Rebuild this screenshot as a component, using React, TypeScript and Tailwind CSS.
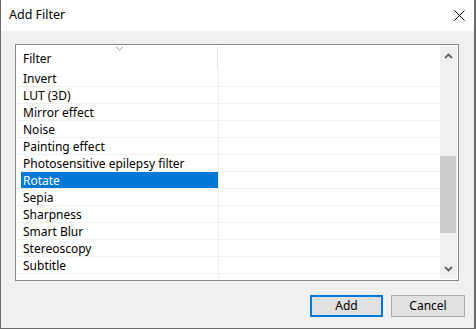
const filters = [
  'Invert',
  'LUT (3D)',
  'Mirror effect',
  'Noise',
  'Painting effect',
  'Photosensitive epilepsy filter',
  'Rotate',
  'Sepia',
  'Sharpness',
  'Smart Blur',
  'Stereoscopy',
  'Subtitle',
  '',
];

const selected = 'Rotate';

function Chevron({ up }: { up?: boolean }) {
  return (
    <svg width="9" height="6" viewBox="0 0 9 6" className="block">
      <path
        d={up ? 'M1 5 L4.5 1.5 L8 5' : 'M1 1 L4.5 4.5 L8 1'}
        fill="none"
        stroke="#606060"
        strokeWidth="1.8"
      />
    </svg>
  );
}

export default function App() {
  return (
    <div className="w-[476px] h-[329px] flex flex-col bg-[#f0f0f0] border-l border-r-2 border-b border-[#6b6b6b] font-['Noto_Sans',sans-serif] text-black overflow-hidden">
      {/* Title bar */}
      <div className="h-[31px] bg-white flex items-center justify-between pl-[8px] pr-[9px] shrink-0">
        <span className="text-[12.5px] leading-none">Add Filter</span>
        <svg width="11" height="11" viewBox="0 0 11 11">
          <path d="M0.5 0.5 L10.5 10.5 M10.5 0.5 L0.5 10.5" stroke="#000" strokeWidth="1" />
        </svg>
      </div>

      {/* List box */}
      <div className="mt-[13px] ml-[14px] w-[444px] h-[237px] border border-[#828790] bg-white p-px flex shrink-0">
        <div className="flex-1 flex flex-col overflow-hidden">
          {/* Header */}
          <div className="h-[24px] flex shrink-0 relative">
            <div className="w-[200px] flex items-center pl-[6px] text-[12px] pt-[2px]">Filter</div>
            <div className="w-px my-px bg-[#e5e5e5]" />
            <svg width="9" height="5" viewBox="0 0 9 5" className="absolute left-[98px] top-0">
              <path d="M1 1 L4.5 4 L8 1" fill="none" stroke="#a0a0a0" strokeWidth="1" />
            </svg>
          </div>
          {/* Rows */}
          {filters.map((f, i) => (
            <div key={i} className="h-[17px] flex shrink-0 border-b border-[#f0f0f0] pr-px">
              <div className="w-[201px] pl-[4px] flex">
                <div
                  className={
                    'flex-1 flex items-center pl-[2px] pt-[2px] text-[12px] leading-none ' +
                    (f === selected ? 'bg-[#0078d7] text-white' : '')
                  }
                >
                  {f}
                </div>
              </div>
              <div className="w-px bg-[#f0f0f0]" />
              <div className="flex-1" />
            </div>
          ))}
        </div>

        {/* Scrollbar */}
        <div className="w-[17px] bg-[#f0f0f0] flex flex-col items-center">
          <div className="h-[17px] flex items-center justify-center pt-[3px]">
            <Chevron up />
          </div>
          <div className="flex-1 w-full pt-[93px] pb-[29px]">
            <div className="h-full bg-[#cdcdcd] mr-px" />
          </div>
          <div className="h-[17px] flex items-center justify-center pb-[3px]">
            <Chevron />
          </div>
        </div>
      </div>

      {/* Buttons */}
      <div className="flex justify-end gap-[8px] pr-[9px] mt-[14px]">
        <button className="w-[73px] h-[22px] bg-[#e1e1e1] border-2 border-[#0078d7] text-[12px] leading-none">
          Add
        </button>
        <button className="w-[74px] h-[22px] bg-[#e1e1e1] border border-[#adadad] text-[12px] leading-none">
          Cancel
        </button>
      </div>
    </div>
  );
}
